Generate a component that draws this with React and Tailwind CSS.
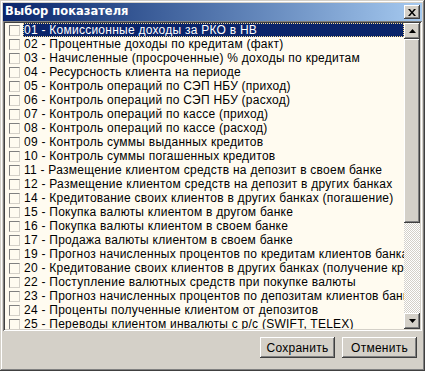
import React from "react";

const items = [
  "01 - Комиссионные доходы за РКО в НВ",
  "02 - Процентные доходы по кредитам (факт)",
  "03 - Начисленные (просроченные) % доходы по кредитам",
  "04 - Ресурсность клиента на периоде",
  "05 - Контроль операций по СЭП НБУ (приход)",
  "06 - Контроль операций по СЭП НБУ (расход)",
  "07 - Контроль операций по кассе (приход)",
  "08 - Контроль операций по кассе (расход)",
  "09 - Контроль суммы выданных кредитов",
  "10 - Контроль суммы погашенных кредитов",
  "11 - Размещение клиентом средств на депозит в своем банке",
  "12 - Размещение клиентом средств на депозит в других банках",
  "14 - Кредитование своих клиентов в других банках (погашение)",
  "15 - Покупка валюты клиентом в другом банке",
  "16 - Покупка валюты клиентом в своем банке",
  "17 - Продажа валюты клиентом в своем банке",
  "19 - Прогноз начисленных процентов по кредитам клиентов банка",
  "20 - Кредитование своих клиентов в других банках (получение кредитов)",
  "22 - Поступление валютных средств при покупке валюты",
  "23 - Прогноз начисленных процентов по депозитам клиентов банка",
  "24 - Проценты полученные клиентом от депозитов",
  "25 - Переводы клиентом инвалюты с р/с (SWIFT, TELEX)",
];

// classic raised 3d border
const raised =
  "bg-[#d4d0c8] shadow-[inset_-1px_-1px_#404040,inset_1px_1px_#fff,inset_-2px_-2px_#808080,inset_2px_2px_#d4d0c8]";

const Arrow = ({ down }) => (
  <svg width="7" height="4" viewBox="0 0 7 4" className={down ? "" : "rotate-180"}>
    <path d="M0 0h7L3.5 4z" fill="#000" />
  </svg>
);

export default function App() {
  return (
    <div
      className="w-[425px] h-[371px] bg-[#d4d0c8] p-[3px] flex flex-col shadow-[inset_-1px_-1px_#404040,inset_1px_1px_#d4d0c8,inset_-2px_-2px_#808080,inset_2px_2px_#fff]"
      style={{ fontFamily: '"Liberation Sans", Arial, sans-serif' }}
    >
      {/* Title bar */}
      <div className="h-[18px] flex items-center justify-between pl-[2px] pr-[2px] bg-gradient-to-r from-[#0a246a] to-[#a6caf0]">
        <span className="text-white font-bold text-[11.5px] leading-none" style={{ fontFamily: '"DejaVu Sans", Verdana, sans-serif' }}>
          Выбор показателя
        </span>
        <div className={`w-[16px] h-[14px] flex items-center justify-center ${raised}`}>
          <svg width="8" height="7" viewBox="0 0 8 7">
            <path d="M0 0h2l2 2.5L6 0h2L5 3.5 8 7H6L4 4.5 2 7H0l3-3.5z" fill="#000" />
          </svg>
        </div>
      </div>

      {/* List */}
      <div className="h-[310px] flex bg-[#fffbf0] shadow-[inset_1px_1px_#808080,inset_-1px_-1px_#fff,inset_2px_2px_#404040,inset_-2px_-2px_#d4d0c8] p-[2px]">
        <div className="flex-1 overflow-hidden pl-[2px]">
          {items.map((t, i) => {
            const sel = i === 0;
            return (
              <div key={t} className="h-[14px] flex items-center">
                <div className="w-[11px] h-[11px] ml-[2px] mr-[3px] shrink-0 bg-[#fffbf0] border border-t-[#808080] border-l-[#808080] border-b-[#d4d0c8] border-r-[#d4d0c8]" />
                <div
                  className={
                    sel
                      ? "flex-1 h-[14px] bg-[#0a246a] text-white border border-dotted border-[#f5db95] flex items-center whitespace-nowrap overflow-hidden text-[12px] tracking-[0.25px] leading-none"
                      : "flex-1 h-[14px] pl-[1px] flex items-center whitespace-nowrap overflow-hidden text-[12px] tracking-[0.25px] leading-none text-black"
                  }
                >
                  {t}
                </div>
              </div>
            );
          })}
        </div>

        {/* Scrollbar */}
        <div className="w-[16px] flex flex-col">
          <div className={`h-[16px] flex items-center justify-center ${raised}`}>
            <Arrow />
          </div>
          <div className={`h-[184px] ${raised}`} />
          <div className="flex-1 bg-[repeating-conic-gradient(#d4d0c8_0_25%,#fff_0_50%)] bg-[length:2px_2px]" />
          <div className={`h-[16px] flex items-center justify-center ${raised}`}>
            <Arrow down />
          </div>
        </div>
      </div>

      {/* Buttons */}
      <div className="flex-1 flex justify-end items-start gap-[7px] pt-[6px] pr-[5px]">
        {["Сохранить", "Отменить"].map((b) => (
          <div
            key={b}
            className={`w-[75px] h-[21px] flex items-center justify-center text-[12px] tracking-[0.25px] text-black ${raised}`}
          >
            {b}
          </div>
        ))}
      </div>
    </div>
  );
}
